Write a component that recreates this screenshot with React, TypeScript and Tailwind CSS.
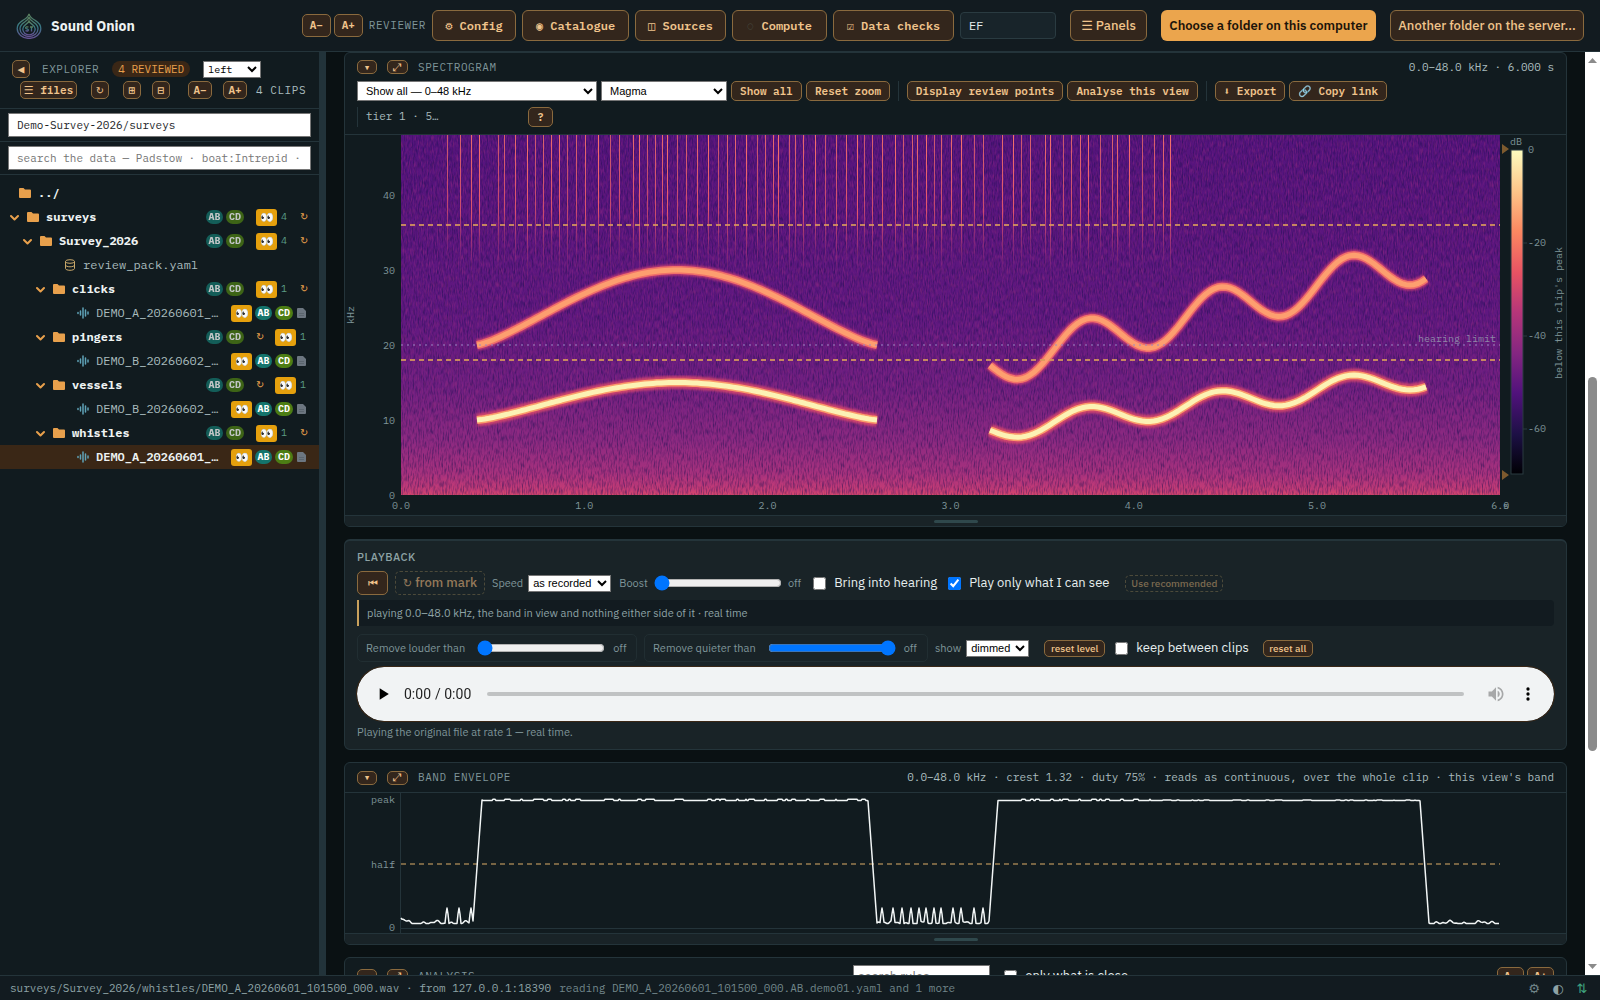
import type { ReactNode } from 'react'

const MONO = "font-['IBM_Plex_Mono','Liberation_Mono','DejaVu_Sans_Mono','DejaVu_Sans',monospace]"
const SANS = "font-['IBM_Plex_Sans',Roboto,'DejaVu_Sans',sans-serif]"
const BTN = 'inline-flex items-center justify-center border border-[#8a6a3e] bg-[#33261c] text-[#f0c48c]'
const LABEL = 'text-[11px] tracking-wider text-[#7f9599]'

function Btn({ className = '', label, children }: { className?: string; label?: string; children: ReactNode }) {
  return <button type="button" aria-label={label} className={`${BTN} ${className}`}>{children}</button>
}

function Logo() {
  return (
    <svg className="h-[26px] w-[26px] opacity-80" viewBox="0 0 26 26" fill="none" aria-hidden="true">
      <defs>
        <linearGradient id="onion" x1="0" y1="0" x2="0" y2="1">
          <stop offset="0" stopColor="#6f9a6c" />
          <stop offset=".5" stopColor="#3f8f9c" />
          <stop offset="1" stopColor="#7a5fb0" />
        </linearGradient>
      </defs>
      <g stroke="url(#onion)" strokeWidth="1.3">
        <path d="M13 .8c.8 3.600 3.200 4.800 6.200 6.600 3 1.800 5.600 4.400 5.600 8.200 0 5.200-5 9.800-11.800 9.800S1.200 20.800 1.200 15.600c0-3.800 2.600-6.400 5.600-8.200C9.800 5.600 12.200 4.400 13 .8Z" />
        <path d="M13 4.200c.6 2.600 2.600 3.800 4.800 5.200 2.400 1.500 4.200 3.500 4.200 6.400 0 4.400-4 7.800-9 7.800s-9-3.400-9-7.800c0-2.900 1.800-4.900 4.200-6.400C10.400 8 12.400 6.800 13 4.200Z" />
        <path d="M13 8c.5 1.600 1.800 2.400 3.200 3.400 1.700 1.200 3 2.600 3 4.700 0 3.200-2.800 5.700-6.200 5.700s-6.200-2.500-6.200-5.700c0-2.100 1.300-3.500 3-4.700C11.200 10.400 12.500 9.600 13 8Z" />
        <path d="M12.400 14.200c-1-.8-2.900-.3-2.800.8.1 1.200 2.800.8 2.800 2s-1.800 1.300-2.900.4M14 14h3M15.500 14v4.400" />
      </g>
    </svg>
  )
}

function Topbar() {
  const nav = 'h-[31px] rounded-md text-xs font-semibold whitespace-pre'
  return (
    <header className="flex h-[52px] shrink-0 items-center border-b border-[#24343a] bg-[#121b20] px-4">
      <Logo />
      <h1 className="ml-[9px] text-sm font-bold text-[#eef3f3]">Sound Onion</h1>
      <div className={`ml-auto flex items-center gap-[6px] ${MONO}`}>
        <div className="flex gap-[3px]">
          <Btn className="h-[23px] w-[29px] rounded-[5px] text-[11px] font-semibold">A−</Btn>
          <Btn className="h-[23px] w-[29px] rounded-[5px] text-[11px] font-semibold">A+</Btn>
        </div>
        <label htmlFor="reviewer" className={LABEL}>REVIEWER</label>
        <Btn className={`${nav} w-[84px]`}>⚙ Config</Btn>
        <Btn className={`${nav} w-[107px]`}>◉ Catalogue</Btn>
        <Btn className={`${nav} w-[91px]`}>◫ Sources</Btn>
        <Btn className={`${nav} w-[95px]`}><span className="text-[#5a6b64]">◌</span> Compute</Btn>
        <Btn className={`${nav} w-[121px]`}>☑ Data checks</Btn>
        <input id="reviewer" defaultValue="EF" className="h-[27px] w-24 rounded border border-[#2a3b41] bg-[#18242a] px-2 text-xs text-[#e6eeee]" />
      </div>
      <div className="ml-[14px] flex gap-[14px] text-[13px] font-medium">
        <Btn className="h-[31px] w-[77px] rounded-md">☰ Panels</Btn>
        <button type="button" className="h-[31px] w-[215px] rounded-md bg-[#eba54d] font-semibold text-[#1c140a]">Choose a folder on this computer</button>
        <Btn className="h-[31px] w-[194px] rounded-md">Another folder on the server...</Btn>
      </div>
    </header>
  )
}

function Chevron() {
  return <svg className="h-[9px] w-[9px] shrink-0" viewBox="0 0 9 9" fill="none" stroke="#e8a04c" strokeWidth="2" strokeLinecap="round" strokeLinejoin="round"><path d="M1 3l3.500 3.500L8 3" /></svg>
}

function Folder() {
  return <svg className="h-3 w-3 shrink-0" viewBox="0 0 12 12" fill="#e8a04c"><path d="M0 2a1 1 0 0 1 1-1h3.500L6 2.500h5a1 1 0 0 1 1 1V10a1 1 0 0 1-1 1H1a1 1 0 0 1-1-1Z" /></svg>
}

function Wave() {
  return <svg className="h-3 w-3 shrink-0" viewBox="0 0 12 12" stroke="#5fa3b8" strokeWidth="1.500" strokeLinecap="round"><path d="M1 5.500v1M3.500 4v4M6 1v10M8.500 3v6M11 5v2" /></svg>
}

function Db() {
  return (
    <svg className="h-3 w-3 shrink-0" viewBox="0 0 12 12" fill="none" stroke="#c9a86a">
      <ellipse cx="6" cy="2.500" rx="4.500" ry="1.800" />
      <path d="M1.500 2.500v7c0 1 2 1.800 4.500 1.800s4.500-.8 4.500-1.800v-7M1.500 6c0 1 2 1.800 4.500 1.800s4.500-.8 4.500-1.800" />
    </svg>
  )
}

function Doc() {
  return <svg className="ml-px h-[10px] w-[9px] shrink-0" viewBox="0 0 9 10"><path fill="#6c7680" d="M0 1a1 1 0 0 1 1-1h5l3 3v6a1 1 0 0 1-1 1H1a1 1 0 0 1-1-1Z" /><path stroke="#5b656e" d="M2 5.500h5M2 7.500h5" /></svg>
}

function Redo() {
  return <span className="font-['DejaVu_Sans',sans-serif]">↻</span>
}

function Tags({ dim }: { dim?: boolean }) {
  return (
    <span className={`flex gap-[3px] text-[10px] font-bold text-white ${dim ? 'opacity-75' : ''}`}>
      <span className="flex h-[14px] w-[17px] items-center justify-center rounded-full bg-[#14746c]">AB</span>
      <span className="flex h-[14px] w-[18px] items-center justify-center rounded-full bg-[#4c7d14]">CD</span>
    </span>
  )
}

function Eyes() {
  return <span className="flex h-[17px] w-[21px] shrink-0 items-center justify-center rounded-[3px] bg-[#e5a00d] text-[11px] leading-none">👀</span>
}

const TREE = [
  { kind: 'dir', name: 'surveys', indent: 'pl-[10px]', count: 4 },
  { kind: 'dir', name: 'Survey_2026', indent: 'pl-[23px]', count: 4 },
  { kind: 'db', name: 'review_pack.yaml', indent: 'pl-[64px]' },
  { kind: 'dir', name: 'clicks', indent: 'pl-[36px]', count: 1 },
  { kind: 'clip', name: 'DEMO_A_20260601_…', indent: 'pl-[77px]' },
  { kind: 'dir', name: 'pingers', indent: 'pl-[36px]', count: 1, stale: true },
  { kind: 'clip', name: 'DEMO_B_20260602_…', indent: 'pl-[77px]' },
  { kind: 'dir', name: 'vessels', indent: 'pl-[36px]', count: 1, stale: true },
  { kind: 'clip', name: 'DEMO_B_20260602_…', indent: 'pl-[77px]' },
  { kind: 'dir', name: 'whistles', indent: 'pl-[36px]', count: 1 },
  { kind: 'clip', name: 'DEMO_A_20260601_…', indent: 'pl-[77px]', active: true },
]

function TreeRow({ row }: { row: (typeof TREE)[number] }) {
  const redo = <span className="w-[9px] text-[10px] text-[#e8a04c]"><Redo /></span>
  if (row.kind === 'dir') {
    return (
      <li className={`flex h-6 items-center ${row.stale ? 'pr-3' : 'pr-[10px]'} ${row.indent}`}>
        <Chevron />
        <span className="ml-2 flex"><Folder /></span>
        <span className="ml-[7px] font-bold text-[#eef3f3]">{row.name}</span>
        <span className="ml-auto flex items-center">
          <Tags dim />
          {row.stale ? <span className="ml-3 flex">{redo}</span> : null}
          <span className={row.stale ? 'ml-[10px] flex' : 'ml-3 flex'}><Eyes /></span>
          <span className="ml-1 w-[7px] text-[10px] text-[#5a9c86]">{row.count}</span>
          {row.stale ? null : <span className="ml-3 flex">{redo}</span>}
        </span>
      </li>
    )
  }
  return (
    <li className={`flex h-6 items-center pr-[13px] ${row.indent} ${row.active ? 'bg-[#3a2716] font-semibold text-[#eef3f3]' : 'text-[#a9bcbe]'}`}>
      {row.kind === 'db' ? <Db /> : <Wave />}
      <span className="ml-[7px]">{row.name}</span>
      {row.kind === 'clip' ? <span className="ml-auto flex items-center gap-[3px]"><Eyes /><Tags /><Doc /></span> : null}
    </li>
  )
}

function Sidebar() {
  const small = 'h-[18px] rounded-[5px] text-[11px] font-semibold'
  return (
    <aside className={`flex w-[319px] shrink-0 flex-col bg-[#111b1f] ${MONO}`}>
      <div className="h-[57px] border-b border-[#24343a] pt-2">
        <div className="flex h-[18px] items-center pl-3">
          <Btn label="Collapse explorer" className={`${small} w-[18px]`}>◀</Btn>
          <h2 className={`ml-3 ${LABEL}`}>EXPLORER</h2>
          <span className="ml-[13px] rounded-full bg-[#3a2716] px-[6px] text-[11px] leading-4 text-[#e8a04c]">4 REVIEWED</span>
          <select aria-label="Dock side" className="ml-[13px] h-[17px] w-[58px] border border-[#767676] bg-white text-[10px] text-black">
            <option>left</option>
          </select>
        </div>
        <div className="mt-[3px] flex items-center pl-5">
          <Btn className={`${small} w-[57px] whitespace-pre`}>☰ files</Btn>
          <Btn label="Refresh" className="ml-[14px] h-[18px] w-[18px] rounded-[5px] text-[10px]"><Redo /></Btn>
          <Btn label="Expand all" className={`${small} ml-[14px] w-[18px]`}>⊞</Btn>
          <Btn label="Collapse all" className={`${small} ml-[11px] w-[18px]`}>⊟</Btn>
          <Btn className={`${small} ml-[18px] w-6`}>A−</Btn>
          <Btn className={`${small} ml-[11px] w-6`}>A+</Btn>
          <span className="ml-[9px] text-[11px] tracking-wider text-[#a9bcbe]">4 CLIPS</span>
        </div>
      </div>
      <div className="border-b border-[#24343a] px-2 py-1">
        <input aria-label="Path" defaultValue="Demo-Survey-2026/surveys" className="block h-6 w-full border border-[#767676] bg-white px-2 text-[11px] text-[#1c2528]" />
      </div>
      <div className="border-b border-[#24343a] px-2 py-1">
        <input aria-label="Search" placeholder="search the data — Padstow · boat:Intrepid ·" className="block h-6 w-full border border-[#767676] bg-white px-2 text-[11px] placeholder:text-[#757575]" />
      </div>
      <ul className="pt-[6px] text-xs">
        <li className="flex h-6 items-center pl-[19px] font-semibold text-[#eef3f3]"><Folder /><a href="#up" className="ml-[7px]">../</a></li>
        {TREE.map((row, i) => <TreeRow key={i} row={row} />)}
      </ul>
    </aside>
  )
}

function PanelButtons() {
  return (
    <>
      <Btn label="Fold" className="h-[14px] w-5 rounded-[5px] text-[11px]">▾</Btn>
      <Btn label="Maximise" className="ml-[10px] h-[14px] w-[21px] rounded-[5px] text-[11px]">⤢</Btn>
    </>
  )
}

function Grip() {
  return <div className="flex h-[11px] items-center justify-center border-t border-[#24343a] bg-[#192327]"><span className="h-[3px] w-11 rounded-full bg-[#2f484c]" /></div>
}

const CLICKS = [
  46, 59, 70, 78, 97, 103, 114, 126, 134, 142, 150, 158, 166, 175, 184, 197, 209, 218, 232, 238, 246, 254, 261, 266, 276, 285, 296, 307, 317,
  326, 334, 345, 356, 364, 372, 377, 388, 394, 402, 414, 424, 435, 445, 456, 463, 471, 481, 494, 502, 511, 516, 525, 533, 540, 550, 560, 573,
  582, 601, 612, 620, 629, 644, 649, 662, 670, 679, 687, 699, 711, 716, 728, 741, 753, 762, 769,
]

const toPath = (pts: number[][]) => 'M' + pts.map(([x, y]) => `${x.toFixed(1)} ${y.toFixed(1)}`).join('L')

function arch(k: number) {
  const pts: number[][] = []
  for (let x = 76; x <= 476; x += 4) {
    const s = Math.pow(Math.max(0, Math.sin((Math.PI * (x - 76)) / 400)), 1.3)
    pts.push([x, 360 - 7.5 * k * (10 + 5 * s)])
  }
  return toPath(pts)
}

function wobble(k: number) {
  const pts: number[][] = []
  for (let x = 589; x <= 1025; x += 4) {
    pts.push([x, 360 - 7.5 * k * (8.7 + 0.016 * (x - 588) - 1.48 * Math.sin((2 * Math.PI * (x - 588)) / 131))])
  }
  return toPath(pts)
}

function Spectrogram() {
  const high = [arch(2), wobble(2)]
  const low = [arch(1), wobble(1)]
  return (
    <svg viewBox="0 0 1221 380" className="block h-auto w-full font-['IBM_Plex_Mono','Liberation_Mono',monospace]" fontSize="10" role="img" aria-label="Spectrogram">
      <defs>
        <linearGradient id="floor" x1="0" y1="0" x2="0" y2="1">
          <stop offset="0" stopColor="#55147d" />
          <stop offset=".5" stopColor="#601880" />
          <stop offset=".7" stopColor="#701f81" />
          <stop offset=".85" stopColor="#8a2981" />
          <stop offset=".94" stopColor="#a8327d" />
          <stop offset=".985" stopColor="#c43c75" />
          <stop offset="1" stopColor="#d8486d" />
        </linearGradient>
        <linearGradient id="click" x1="0" y1="0" x2="0" y2="1">
          <stop offset="0" stopColor="#f4716b" />
          <stop offset=".55" stopColor="#e4566b" />
          <stop offset="1" stopColor="#a3307e" stopOpacity="0" />
        </linearGradient>
        <linearGradient id="magma" x1="0" y1="0" x2="0" y2="1">
          <stop offset="0" stopColor="#fcfdbf" />
          <stop offset=".13" stopColor="#fec488" />
          <stop offset=".25" stopColor="#fb8861" />
          <stop offset=".38" stopColor="#e75263" />
          <stop offset=".5" stopColor="#b63679" />
          <stop offset=".63" stopColor="#832681" />
          <stop offset=".75" stopColor="#51127c" />
          <stop offset=".88" stopColor="#1c1044" />
          <stop offset="1" stopColor="#000004" />
        </linearGradient>
        <filter id="dark" x="0" y="0" width="1" height="1" colorInterpolationFilters="sRGB">
          <feTurbulence type="fractalNoise" baseFrequency=".8 .15" numOctaves="2" seed="4" />
          <feColorMatrix values="0 0 0 0 .11  0 0 0 0 .06  0 0 0 0 .32  2.600 0 0 0 -1.100" />
        </filter>
        <filter id="light" x="0" y="0" width="1" height="1" colorInterpolationFilters="sRGB">
          <feTurbulence type="fractalNoise" baseFrequency=".8 .15" numOctaves="2" seed="11" />
          <feColorMatrix values="0 0 0 0 .62  0 0 0 0 .18  0 0 0 0 .5  2.400 0 0 0 -1.100" />
        </filter>
        <filter id="glow" x="-.1" y="-.2" width="1.200" height="1.400"><feGaussianBlur stdDeviation="1" /></filter>
      </defs>
      <g transform="translate(56 0)">
        <rect width="1099" height="360" fill="url(#floor)" />
        <rect width="1099" height="360" filter="url(#dark)" opacity=".5" />
        <rect width="1099" height="360" filter="url(#light)" opacity=".45" />
        {CLICKS.map((x, i) => <rect key={x} x={x} width="1" height={132 + ((i * 7) % 17)} fill="url(#click)" opacity={0.75 + ((i * 5) % 4) / 12} />)}
        <g fill="none" strokeLinejoin="round">
          {high.map((d) => (
            <g key={d}>
              <path d={d} stroke="#c83e73" strokeWidth="11" opacity=".9" filter="url(#glow)" />
              <path d={d} stroke="#f0706a" strokeWidth="8" />
              <path d={d} stroke="#fd9f6f" strokeWidth="5" />
            </g>
          ))}
          {low.map((d) => (
            <g key={d}>
              <path d={d} stroke="#dc4a6c" strokeWidth="13" opacity=".85" filter="url(#glow)" />
              <path d={d} stroke="#fb9a6a" strokeWidth="8" />
              <path d={d} stroke="#fcf2b4" strokeWidth="5" />
            </g>
          ))}
        </g>
        <path d="M0 90h1099M0 225h1099" stroke="#d99a5c" strokeWidth="2" strokeDasharray="5 4" opacity=".85" />
        <path d="M0 210h1099" stroke="#9a86c4" strokeWidth="1" strokeDasharray="2 4" />
        <text x="1095" y="207" textAnchor="end" fill="#8f87a8">hearing limit</text>
      </g>
      <g fill="#7f9599" textAnchor="end">
        <text x="50" y="64">40</text>
        <text x="50" y="139">30</text>
        <text x="50" y="214">20</text>
        <text x="50" y="289">10</text>
        <text x="50" y="364">0</text>
      </g>
      <g fill="#7f9599" textAnchor="middle">
        {[0, 1, 2, 3, 4, 5, 6].map((s) => <text key={s} x={56 + s * 183.2} y="374">{s.toFixed(1)}</text>)}
        <text x="1161" y="374">s</text>
        <text transform="translate(9 180) rotate(-90)">kHz</text>
        <text x="1171" y="10">dB</text>
        <text transform="translate(1217 178) rotate(-90)">below this clip's peak</text>
      </g>
      <rect x="1166" y="15" width="12" height="324" fill="url(#magma)" stroke="#2a3b41" />
      <path d="M1178 108h4M1178 201h4M1178 294h4" stroke="#2a3b41" />
      <g fill="#7f9599">
        <text x="1183" y="18">0</text>
        <text x="1183" y="111">-20</text>
        <text x="1183" y="204">-40</text>
        <text x="1183" y="297">-60</text>
      </g>
      <path d="M1157 9l7 5-7 5ZM1157 335l7 5-7 5Z" fill="#7d5a2e" />
    </svg>
  )
}

function SpectrogramPanel() {
  const tool = 'h-5 rounded-[5px] text-[11px] font-semibold whitespace-pre'
  return (
    <section className="overflow-hidden rounded-md border border-[#24343a] bg-[#111b1f]">
      <div className={`border-b border-[#24343a] px-3 pb-[7px] ${MONO}`}>
        <div className="flex h-7 items-center">
          <PanelButtons />
          <h2 className={`ml-[10px] ${LABEL}`}>SPECTROGRAM</h2>
          <span className="ml-auto text-[11px] text-[#a9bcbe]">0.0–48.0 kHz · 6.000 s</span>
        </div>
        <div className="flex flex-wrap items-center gap-x-1 gap-y-[6px]">
          <select aria-label="Band" className="h-5 w-60 border border-[#767676] bg-white pl-1 font-['Liberation_Sans',sans-serif] text-[11px] text-black"><option>Show all — 0–48 kHz</option></select>
          <select aria-label="Colour map" className="h-5 w-[126px] border border-[#767676] bg-white pl-1 font-['Liberation_Sans',sans-serif] text-[11px] text-black"><option>Magma</option></select>
          <Btn className={`${tool} w-[71px]`}>Show all</Btn>
          <Btn className={`${tool} w-[84px]`}>Reset zoom</Btn>
          <span className="mx-1 h-5 w-px bg-[#24343a]" />
          <Btn className={`${tool} w-[156px]`}>Display review points</Btn>
          <Btn className={`${tool} w-[131px]`}>Analyse this view</Btn>
          <span className="mx-1 h-5 w-px bg-[#24343a]" />
          <Btn className={`${tool} w-[70px]`}>⬇ Export</Btn>
          <Btn className={`${tool} w-[98px]`}>🔗 Copy link</Btn>
          <div className="flex basis-full items-center">
            <span className="h-5 w-[171px] border-l border-[#24343a] pl-2 text-[11px] leading-[18px] text-[#a9bcbe]">tier 1 · 5…</span>
            <Btn className={`${tool} w-[25px]`}>?</Btn>
          </div>
        </div>
      </div>
      <Spectrogram />
      <Grip />
    </section>
  )
}

function Playback() {
  const muted = 'text-[11px] text-[#7f9599]'
  const check = 'h-[13px] w-[13px]'
  const sel = "h-[17px] border border-[#767676] bg-white font-['Liberation_Sans',sans-serif] text-[11px] text-black"
  return (
    <section className="h-[211px] rounded-md border border-t-2 border-[#24343a] bg-[#192327] px-3 pt-2 text-[13px] text-[#e6eeee]">
      <h2 className="text-[11px] leading-4 font-medium tracking-wider text-[#8ea3a6]">PLAYBACK</h2>
      <div className="mt-[6px] flex h-6 items-center">
        <Btn label="Back to start" className="h-6 w-[31px] rounded-[5px] text-[11px]">⏮</Btn>
        <button type="button" disabled className="ml-[7px] h-6 w-[90px] rounded-[5px] border border-dashed border-[#4c4a3a] font-medium text-[#94795a]"><span className="text-[11px]"><Redo /></span> from mark</button>
        <label className={`ml-[7px] flex items-center gap-[5px] ${muted}`}>Speed
          <select className={`${sel} w-[83px]`}><option>as recorded</option></select>
        </label>
        <label className={`ml-2 flex items-center ${muted}`}>Boost
          <input type="range" defaultValue="0" className="mx-[6px] w-[128px]" />off
        </label>
        <label className="ml-3 flex items-center gap-2"><input type="checkbox" className={check} />Bring into hearing</label>
        <label className="ml-[11px] flex items-center gap-2"><input type="checkbox" defaultChecked className={check} />Play only what I can see</label>
        <button type="button" disabled className="ml-4 h-[17px] w-[98px] rounded-[5px] border border-dashed border-[#4c4a3a] text-[10px] font-medium text-[#7c6a50]">Use recommended</button>
      </div>
      <p className="mt-[5px] h-[26px] rounded-r border-l-2 border-[#c9a15c] bg-[#121b20] pl-2 text-[11px] leading-[26px] text-[#8ea3a6]">playing 0.0–48.0 kHz, the band in view and nothing either side of it · real time</p>
      <div className={`mt-2 flex h-7 items-center ${muted}`}>
        <label className="flex h-7 w-[280px] items-center rounded-[5px] border border-[#212e32] pl-2">Remove louder than
          <input type="range" defaultValue="0" className="mr-2 ml-3 w-[128px]" />off
        </label>
        <label className="ml-[7px] flex h-7 w-[284px] items-center rounded-[5px] border border-[#212e32] pl-2">Remove quieter than
          <input type="range" defaultValue="100" className="mr-2 ml-3 w-[128px]" />off
        </label>
        <label className="ml-[7px] flex items-center gap-[5px]">show
          <select className={`${sel} w-[63px]`}><option>dimmed</option></select>
        </label>
        <Btn className="ml-[15px] h-[17px] w-[61px] rounded-[5px] text-[10px] font-medium">reset level</Btn>
        <label className="ml-[10px] flex items-center gap-2 text-[13px] text-[#e6eeee]"><input type="checkbox" className={check} />keep between clips</label>
        <Btn className="ml-[14px] h-[17px] w-[50px] rounded-[5px] text-[10px] font-medium">reset all</Btn>
      </div>
      <audio controls preload="none" src="#clip" className="mt-[5px] block h-[54px] w-full rounded-full ring-1 ring-[#3a2716]" />
      <p className="mt-[3px] text-[11px] leading-4 text-[#7f9599]">Playing the original file at rate 1 — real time.</p>
    </section>
  )
}

const SPIKES = [46, 58, 70, 481, 492, 501, 510, 518, 525, 533, 540, 552, 560, 573, 582]

function envelope() {
  const pts: number[][] = [[0, 125]]
  for (let x = 1; x <= 1098; x++) {
    const n = Math.sin(x * 0.31) * Math.sin(x * 0.13) + Math.sin(x * 0.9) * 0.4
    if ((x >= 72 && x < 82) || (x >= 588 && x < 597)) {
      const from = x < 100 ? 72 : 588
      pts.push([x, 128 - ((x - from) / 9) * 121])
    } else if ((x >= 82 && x < 467) || (x >= 597 && x < 1019)) {
      pts.push([x, 7.5 - (n > 0.3 ? (x > 760 ? 0.4 : 1.2) : 0)])
    } else if ((x >= 467 && x < 477) || (x >= 1019 && x < 1029)) {
      const from = x < 500 ? 467 : 1019
      pts.push([x, 8 + ((x - from) / 9) * 122])
    } else {
      const spike = SPIKES.find((s) => Math.abs(s - x) <= 1)
      pts.push([x, spike === undefined ? 130 - Math.max(-0.5, n * 2) - Math.max(0, 10 - x) / 3 : spike === x ? 115 : 121])
    }
  }
  return toPath(pts)
}

function BandEnvelope() {
  return (
    <section className={`overflow-hidden rounded-md border border-[#24343a] bg-[#111b1f] ${MONO}`}>
      <div className="flex h-[30px] items-center border-b border-[#24343a] px-3">
        <PanelButtons />
        <h2 className={`ml-[10px] ${LABEL}`}>BAND ENVELOPE</h2>
        <span className="ml-auto text-[11px] text-[#a9bcbe]">0.0–48.0 kHz · crest 1.32 · duty 75% · reads as continuous, over the whole clip · this view's band</span>
      </div>
      <svg viewBox="0 0 1221 140" className="block h-auto w-full" fontSize="10" role="img" aria-label="Band envelope">
        <g fill="#7f9599" textAnchor="end">
          <text x="50" y="10">peak</text>
          <text x="50" y="75">half</text>
          <text x="50" y="138">0</text>
        </g>
        <path d="M55.500 0v140M56 135.500h1099" stroke="#24343a" />
        <path d="M56 71h1099" stroke="#776443" strokeWidth="2" strokeDasharray="5 4" />
        <path transform="translate(56 0)" d={envelope()} fill="none" stroke="#f2f6f6" strokeWidth="1.500" strokeLinejoin="round" />
      </svg>
      <Grip />
    </section>
  )
}

function Analysis() {
  return (
    <section className={`shrink-0 rounded-md border border-[#24343a] bg-[#111b1f] ${MONO}`}>
      <div className="flex h-9 items-center px-3">
        <PanelButtons />
        <h2 className={`ml-[10px] ${LABEL}`}>ANALYSIS</h2>
        <input aria-label="Search rules" placeholder="search rules" className={`ml-[378px] h-[22px] w-[137px] border border-[#767676] bg-white px-1 text-[13px] placeholder:text-[#757575] ${SANS}`} />
        <label className={`ml-[14px] flex items-center gap-2 text-[13px] text-[#e6eeee] ${SANS}`}><input type="checkbox" className="h-[13px] w-[13px]" />only what is close</label>
        <Btn className="ml-auto h-[18px] w-[27px] rounded-[5px] text-[11px] font-semibold">A−</Btn>
        <Btn className="ml-[3px] h-[18px] w-[27px] rounded-[5px] text-[11px] font-semibold">A+</Btn>
      </div>
    </section>
  )
}

function Scrollbar() {
  return (
    <div aria-hidden="true" className="flex w-[15px] shrink-0 flex-col items-center justify-between bg-white py-[6px]">
      <svg className="h-[5px] w-[9px]" viewBox="0 0 9 5"><path d="M0 5h9L4.500 0Z" fill="#8b8b8b" /></svg>
      <div className="mt-[314px] mb-auto h-[374px] w-[9px] rounded-full bg-[#8b8b8b]" />
      <svg className="h-[5px] w-[9px]" viewBox="0 0 9 5"><path d="M0 0h9L4.500 5Z" fill="#8b8b8b" /></svg>
    </div>
  )
}

export default function App() {
  return (
    <div className={`flex h-screen flex-col overflow-hidden bg-[#0a1113] text-[#dce6e6] ${SANS}`}>
      <Topbar />
      <div className="flex min-h-0 flex-1">
        <Sidebar />
        <div className="w-[7px] shrink-0 bg-[#22333a]" />
        <main className="flex min-w-0 flex-1 flex-col gap-3 overflow-hidden px-[18px] *:shrink-0">
          <SpectrogramPanel />
          <Playback />
          <BandEnvelope />
          <Analysis />
        </main>
        <Scrollbar />
      </div>
      <footer className={`flex h-[25px] shrink-0 items-center border-t border-[#24343a] bg-[#121b20] px-[10px] text-[11px] text-[#8ea3a6] ${MONO}`}>
        <span>surveys/Survey_2026/whistles/DEMO_A_20260601_101500_000.wav · from 127.0.0.1:18390</span>
        <span className="ml-2 text-[#71868a]">reading DEMO_A_20260601_101500_000.AB.demo01.yaml and 1 more</span>
        <span className="ml-auto flex gap-3 pr-[2px] font-['DejaVu_Sans',sans-serif] text-[13px] leading-none">
          <button type="button" aria-label="Settings" className="w-3 text-[#71868a]">⚙</button>
          <button type="button" aria-label="Theme" className="w-3">◐</button>
          <button type="button" aria-label="Transfers" className="w-3 text-[#3fa37f]">⇅</button>
        </span>
      </footer>
    </div>
  )
}
